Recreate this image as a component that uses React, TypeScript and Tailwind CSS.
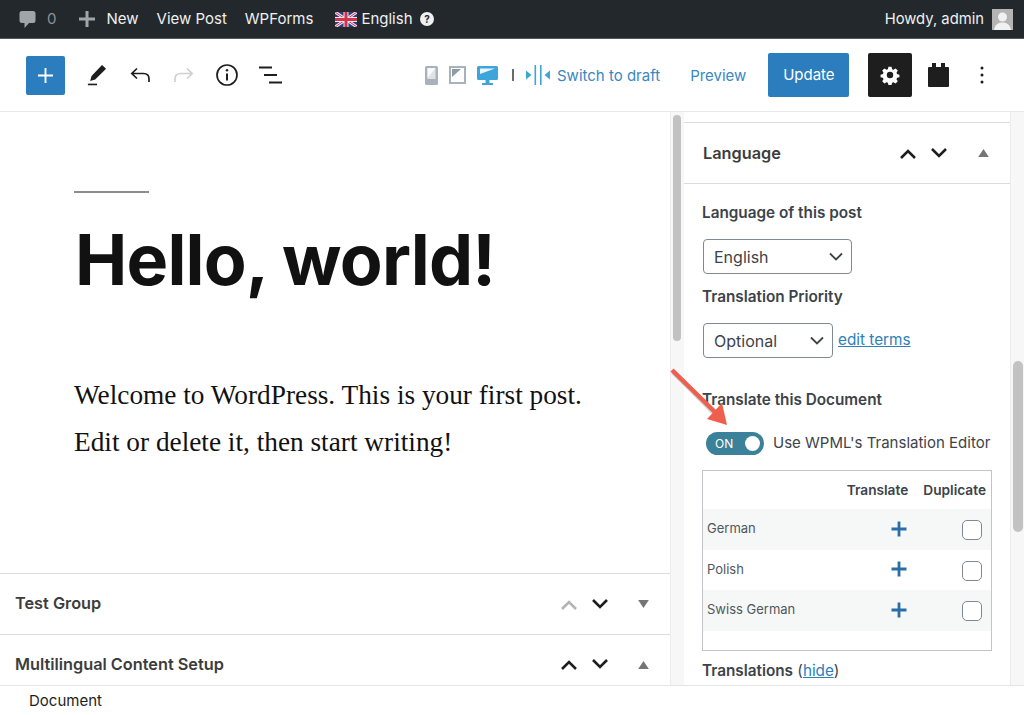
import React from "react";

const Chevron = ({ up, cls }: { up?: boolean; cls: string }) => (
  <svg viewBox="0 0 18 11" className={`w-[18px] h-[11px] ${cls}`} fill="none" stroke="currentColor" strokeWidth="2.6">
    <path d={up ? "M2 10 L9 3 L16 10" : "M2 1 L9 8 L16 1"} />
  </svg>
);
const Tri = ({ up }: { up?: boolean }) => (
  <svg viewBox="0 0 12 9" className="w-[11px] h-[8px] text-[#757575]" fill="currentColor">
    <path d={up ? "M6 0 L12 9 L0 9 Z" : "M0 0 L12 0 L6 9 Z"} />
  </svg>
);
const Caret = () => (
  <svg viewBox="0 0 14 9" className="w-[14px] h-[9px] text-[#3c434a]" fill="none" stroke="currentColor" strokeWidth="1.8">
    <path d="M1 1.5 L7 7.5 L13 1.5" />
  </svg>
);
const Plus = () => (
  <svg viewBox="0 0 16 16" className="w-[16px] h-[16px] text-[#2a6ea8]" fill="currentColor">
    <path d="M6.6 0.5h2.8v6.1h6.1v2.8H9.4v6.1H6.6V9.4H0.5V6.6h6.1z" />
  </svg>
);

const Row = ({ name, shaded }: { name: string; shaded: boolean }) => (
  <div className={`h-[40.5px] flex items-center pl-[4px] ${shaded ? "bg-[#f6f7f7]" : ""}`}>
    <span className="flex-1 text-[13px] mb-[1px] text-[#50575e]">{name}</span>
    <span className="w-[16px] mr-[55px] mb-[1px] flex"><Plus /></span>
    <span className="w-[20px] h-[20px] mr-[9px] mt-[2px] rounded-[5px] border border-[#7e8993] bg-white" />
  </div>
);

const Flag = () => (
  <svg viewBox="0 0 22 15" className="w-[22px] h-[15px] mr-[4px]">
    <rect width="22" height="15" fill="#2b3f86" />
    <path d="M0 0 L22 15 M22 0 L0 15" stroke="#f2e6ea" strokeWidth="3" />
    <path d="M0 0 L22 15 M22 0 L0 15" stroke="#d2334c" strokeWidth="1" />
    <path d="M11 0 V15 M0 7.5 H22" stroke="#f2e6ea" strokeWidth="5" />
    <path d="M11 0 V15 M0 7.5 H22" stroke="#d2334c" strokeWidth="3" />
  </svg>
);

export default function App() {
  return (
    <div className="relative w-[1024px] h-[715px] overflow-hidden bg-white font-['Inter','Liberation_Sans',sans-serif] text-[#1e1e1e]">
      {/* admin bar */}
      <div className="h-[39px] bg-[#23282d] border-b border-[#55595d] flex items-center text-[15px] text-[#eef0f1]">
        <svg viewBox="0 0 17 20" className="w-[17px] h-[20px] ml-[19px] mt-[2px] text-[#a0a5aa]" fill="currentColor">
          <path d="M3 1h11a2.5 2.5 0 0 1 2.5 2.5v7A2.5 2.5 0 0 1 14 13h-4l-4.500 5v-5H3A2.500 2.500 0 0 1 .5 10.500v-7A2.500 2.500 0 0 1 3 1z" />
        </svg>
        <span className="ml-[11px] text-[#8d9296]">0</span>
        <svg viewBox="0 0 16 16" className="w-[16px] h-[16px] ml-[23px] text-[#a0a5aa]" fill="currentColor">
          <path d="M6.500 0h3v6.500H16v3H9.500V16h-3V9.500H0v-3h6.500z" />
        </svg>
        <span className="ml-[11px]">New</span>
        <span className="ml-[18px]">View Post</span>
        <span className="ml-[18px]">WPForms</span>
        <span className="ml-[22px] flex items-center">
          <Flag />
          <span>English</span>
        </span>
        <svg viewBox="0 0 14 14" className="w-[14px] h-[14px] ml-[7px]">
          <circle cx="7" cy="7" r="7" fill="#eef0f1" />
          <text x="7" y="10.500" textAnchor="middle" fontSize="10" fontWeight="700" fill="#23282d">?</text>
        </svg>
        <span className="ml-auto text-[14.8px]">Howdy, admin</span>
        <span className="ml-[8px] mr-[11px] w-[21px] h-[21px] bg-[#b4b4b4] overflow-hidden flex">
          <svg viewBox="0 0 21 21" className="w-[21px] h-[21px]" fill="#f1f1f1">
            <circle cx="10.500" cy="8" r="4.500" />
            <path d="M2 21c1-6 5-7.500 8.500-7.500S18 15 19 21z" />
          </svg>
        </span>
      </div>

      {/* toolbar */}
      <div className="h-[73px] border-b border-[#e8e8e8] flex items-center">
        <div className="ml-[26px] w-[39px] h-[39px] rounded-[2px] bg-[#2c7dbd] flex items-center justify-center">
          <svg viewBox="0 0 16 16" className="w-[15px] h-[15px]" fill="none" stroke="#fff" strokeWidth="2">
            <path d="M8 0 V16 M0 8 H16" />
          </svg>
        </div>
        <svg viewBox="0 0 22 24" className="ml-[22px] w-[20px] h-[22px]" fill="#1e1e1e">
          <path d="M16.500 1 L21 5 L9 17 L3.500 18.500 L5 13z" />
          <rect x="1" y="21.500" width="10" height="1.800" />
        </svg>
        <svg viewBox="0 0 20 16" className="ml-[23px] w-[20px] h-[16px]" fill="none" stroke="#1e1e1e" strokeWidth="1.700">
          <path d="M7 1.500 L1.800 6.500 L7 11.500 M2 6.500 H13.500 Q19 6.500 19 12 V15" />
        </svg>
        <svg viewBox="0 0 20 16" className="ml-[24px] w-[20px] h-[16px]" fill="none" stroke="#d0d0d0" strokeWidth="1.700">
          <path d="M13 1.500 L18.200 6.500 L13 11.500 M18 6.500 H6.500 Q1 6.500 1 12 V15" />
        </svg>
        <svg viewBox="0 0 22 22" className="ml-[22px] w-[22px] h-[22px]" fill="none" stroke="#1e1e1e" strokeWidth="1.700">
          <circle cx="11" cy="11" r="10" />
          <path d="M11 9.500 V16.500" strokeWidth="2" />
          <circle cx="11" cy="6.300" r="1.200" fill="#1e1e1e" stroke="none" />
        </svg>
        <svg viewBox="0 0 23 18" className="ml-[21px] w-[23px] h-[18px]" fill="none" stroke="#1e1e1e" strokeWidth="1.800">
          <path d="M0 1.500 H13 M5 9 H18 M10 16.500 H23" />
        </svg>

        <svg viewBox="0 0 13 19" className="ml-[143px] w-[13px] h-[19px]">
          <rect width="13" height="19" rx="1.500" fill="#a7b2bd" />
          <rect x="2.500" y="2" width="8" height="11" fill="#dfe3e7" />
          <path d="M2.500 2 H10.500 L2.500 12 Z" fill="#fafafa" />
        </svg>
        <svg viewBox="0 0 17 18" className="ml-[11px] w-[17px] h-[18px]">
          <rect x="1" y="1" width="15" height="16" fill="#fff" stroke="#a7b2bd" strokeWidth="2" />
          <path d="M3 3 H12 L3 11 Z" fill="#8d99a5" />
        </svg>
        <svg viewBox="0 0 21 19" className="ml-[11px] w-[21px] h-[19px]" fill="#3da5d9">
          <path d="M1.500 0 H19.500 A1.500 1.500 0 0 1 21 1.500 V12.500 A1.500 1.500 0 0 1 19.500 14 H1.500 A1.500 1.500 0 0 1 0 12.500 V1.500 A1.500 1.500 0 0 1 1.500 0z" />
          <path d="M3 2.500 H18 L3 8z" fill="#e9f5fb" />
          <rect x="8.500" y="14" width="4" height="3" />
          <rect x="5" y="17" width="11" height="2" />
        </svg>
        <span className="ml-[14px] w-[2px] h-[12px] bg-[#6b6b6b]" />
        <svg viewBox="0 0 24 20" className="ml-[12px] w-[24px] h-[20px] text-[#3da5d9]" fill="currentColor">
          <rect x="8.500" y="0" width="1.600" height="20" />
          <rect x="14" y="0" width="1.600" height="20" />
          <path d="M0 5.500 L5.500 10 L0 14.500z M24 5.500 L18.500 10 L24 14.500z" />
        </svg>
        <span className="ml-[7px] mt-[2px] text-[15px] text-[#3a87c2] whitespace-nowrap">Switch to draft</span>
        <span className="ml-[30px] mt-[2px] text-[15px] text-[#3a87c2]">Preview</span>
        <div className="ml-[22px] w-[81px] h-[44px] rounded-[2px] bg-[#2c7dbd] text-white text-[15px] flex items-center justify-center pt-[1px]">Update</div>
        <div className="ml-[19px] w-[44px] h-[44px] rounded-[2px] bg-[#1e1e1e] flex items-center justify-center">
          <svg viewBox="0 0 24 24" className="w-[22px] h-[22px]" fill="#fff">
            <path fillRule="evenodd" d="M10.300 3h3.400l.6 2.600 1.500.6 2.300-1.400 2.400 2.400-1.400 2.300.6 1.500 2.600.6v2.800l-2.600.6-.6 1.500 1.400 2.300-2.400 2.400-2.300-1.400-1.500.6-.6 2.600h-3.400l-.6-2.600-1.500-.6-2.300 1.400-2.400-2.400 1.400-2.300-.6-1.500-2.600-.6v-2.800l2.600-.6.6-1.500-1.400-2.300 2.400-2.400 2.300 1.400 1.500-.6zM12 8.500a3.500 3.500 0 1 0 0 7 3.500 3.500 0 0 0 0-7z" />
          </svg>
        </div>
        <svg viewBox="0 0 21 24" className="ml-[16px] w-[21px] h-[24px]" fill="#1e1e1e">
          <path d="M4 0h4v4h5V0h4v4h3a1 1 0 0 1 1 1v18a1 1 0 0 1-1 1H1a1 1 0 0 1-1-1V5a1 1 0 0 1 1-1h3z" />
        </svg>
        <svg viewBox="0 0 4 18" className="ml-[31px] w-[4px] h-[18px]" fill="#1e1e1e">
          <circle cx="2" cy="2" r="1.500" />
          <circle cx="2" cy="9" r="1.500" />
          <circle cx="2" cy="16" r="1.500" />
        </svg>
      </div>

      {/* main */}
      <div className="h-[573px] flex">
        {/* editor column */}
        <div className="w-[670px] flex flex-col overflow-hidden">
          <div className="h-[461px] pl-[74px] pt-[79px]">
            <div className="w-[75px] h-[2px] bg-[#8c8c8c]" />
            <h1 className="mt-[22px] ml-[1px] text-[70px] leading-[90px] font-bold tracking-[-0.8px] text-[#111]">Hello, world!</h1>
            <p className="mt-[67px] font-['Liberation_Serif',serif] text-[27.3px] leading-[47px] text-[#111]">
              Welcome to WordPress. This is your first post.
              <br />
              Edit or delete it, then start writing!
            </p>
          </div>
          <div className="h-[61px] shrink-0 border-t border-[#dcdcde] flex items-center pl-[15px]">
            <span className="flex-1 mb-[2px] text-[16.3px] font-semibold text-[#3c3c3c]">Test Group</span>
            <span className="flex items-center gap-[13px]">
              <Chevron up cls="text-[#b3b3b3]" />
              <Chevron cls="text-[#1e1e1e]" />
            </span>
            <span className="ml-[29px] mr-[21px] flex"><Tri /></span>
          </div>
          <div className="h-[51px] shrink-0 border-t border-[#dcdcde] flex items-start pt-[19px] pl-[15px]">
            <span className="flex-1 text-[16.3px] leading-[20px] font-semibold text-[#3c3c3c]">Multilingual Content Setup</span>
            <span className="flex items-center gap-[13px] mt-[5px]">
              <Chevron up cls="text-[#1e1e1e]" />
              <Chevron cls="text-[#1e1e1e]" />
            </span>
            <span className="ml-[29px] mr-[21px] mt-[7px] flex"><Tri up /></span>
          </div>
        </div>

        {/* editor scrollbar */}
        <div className="w-[14px] bg-[#f7f7f7] border-l border-[#ececec] pt-[3px] pl-[2px]">
          <div className="w-[8px] h-[226px] rounded-[4px] bg-[#c2c2c2]" />
        </div>

        {/* sidebar */}
        <div className="w-[326px] pt-[10px] overflow-hidden">
          <div className="h-[62px] border-t border-b border-[#dcdcde] flex items-center pl-[19px]">
            <span className="flex-1 text-[16.3px] font-semibold text-[#3c3c3c]">Language</span>
            <span className="flex items-center gap-[13px]">
              <Chevron up cls="text-[#1e1e1e]" />
              <Chevron cls="text-[#1e1e1e]" />
            </span>
            <span className="ml-[30px] mr-[21px] flex"><Tri up /></span>
          </div>
          <div className="pl-[18px] pr-[18px] text-[#3c434a]">
            <div className="mt-[19px] h-[20px] text-[15.3px] leading-[20px] font-semibold whitespace-nowrap">Language of this post</div>
            <div className="mt-[16px] ml-[1px] w-[149px] h-[35px] rounded-[4px] border border-[#7e8993] flex items-center justify-between pl-[10px] pr-[8px] text-[16px]">
              <span>English</span>
              <Caret />
            </div>
            <div className="mt-[13px] h-[20px] text-[15.3px] leading-[20px] font-semibold whitespace-nowrap">Translation Priority</div>
            <div className="mt-[16px] flex items-center">
              <div className="ml-[1px] w-[130px] h-[35px] rounded-[4px] border border-[#7e8993] flex items-center justify-between pl-[10px] pr-[8px] text-[16px]">
                <span>Optional</span>
                <Caret />
              </div>
              <span className="ml-[5px] text-[15.3px] underline text-[#2c81ba]">edit terms</span>
            </div>
            <div className="mt-[32px] h-[20px] text-[15.3px] leading-[20px] font-semibold whitespace-nowrap">Translate this Document</div>
            <div className="mt-[22px] flex items-center">
              <div className="ml-[4px] w-[58px] h-[23px] rounded-full bg-[#3b8199] flex items-center justify-between pl-[9px] pr-[4px] text-[12px] text-white">
                <span>ON</span>
                <span className="w-[15px] h-[15px] rounded-full bg-white" />
              </div>
              <span className="ml-[9px] text-[15px] whitespace-nowrap">Use WPML's Translation Editor</span>
            </div>
            <div className="mt-[15px] w-[290px] h-[181px] border border-[#c3c4c7]">
              <div className="h-[38px] flex items-center justify-end pr-[5px] text-[13.7px] font-semibold whitespace-nowrap">
                <span>Translate</span>
                <span className="ml-[15px]">Duplicate</span>
              </div>
              <Row name="German" shaded />
              <Row name="Polish" shaded={false} />
              <Row name="Swiss German" shaded />
            </div>
            <div className="mt-[10px] h-[20px] text-[15.3px] leading-[20px] whitespace-nowrap">
              <span className="font-semibold">Translations</span> (<span className="underline text-[#2c81ba]">hide</span>)
            </div>
          </div>
        </div>

        {/* sidebar scrollbar */}
        <div className="w-[14px] bg-[#f7f7f7] border-l border-[#ececec] pt-[249px] pl-[2px]">
          <div className="w-[10px] h-[171px] rounded-[5px] bg-[#c2c2c2]" />
        </div>
      </div>

      {/* footer */}
      <div className="h-[30px] border-t border-[#e4e4e4] bg-white pl-[29px] text-[15px] leading-[29px] text-[#1e1e1e]">Document</div>

      {/* annotation arrow */}
      <svg viewBox="0 0 70 70" className="absolute left-[665px] top-[362px] w-[70px] h-[70px]">
        <path d="M8 10 L52 54" stroke="#00000033" strokeWidth="4.500" fill="none" />
        <path d="M7 8 L52 52" stroke="#ee5f4d" strokeWidth="4.500" fill="none" />
        <path d="M62 63 L42 57 L57 41 Z" fill="#ee5f4d" />
      </svg>
    </div>
  );
}
